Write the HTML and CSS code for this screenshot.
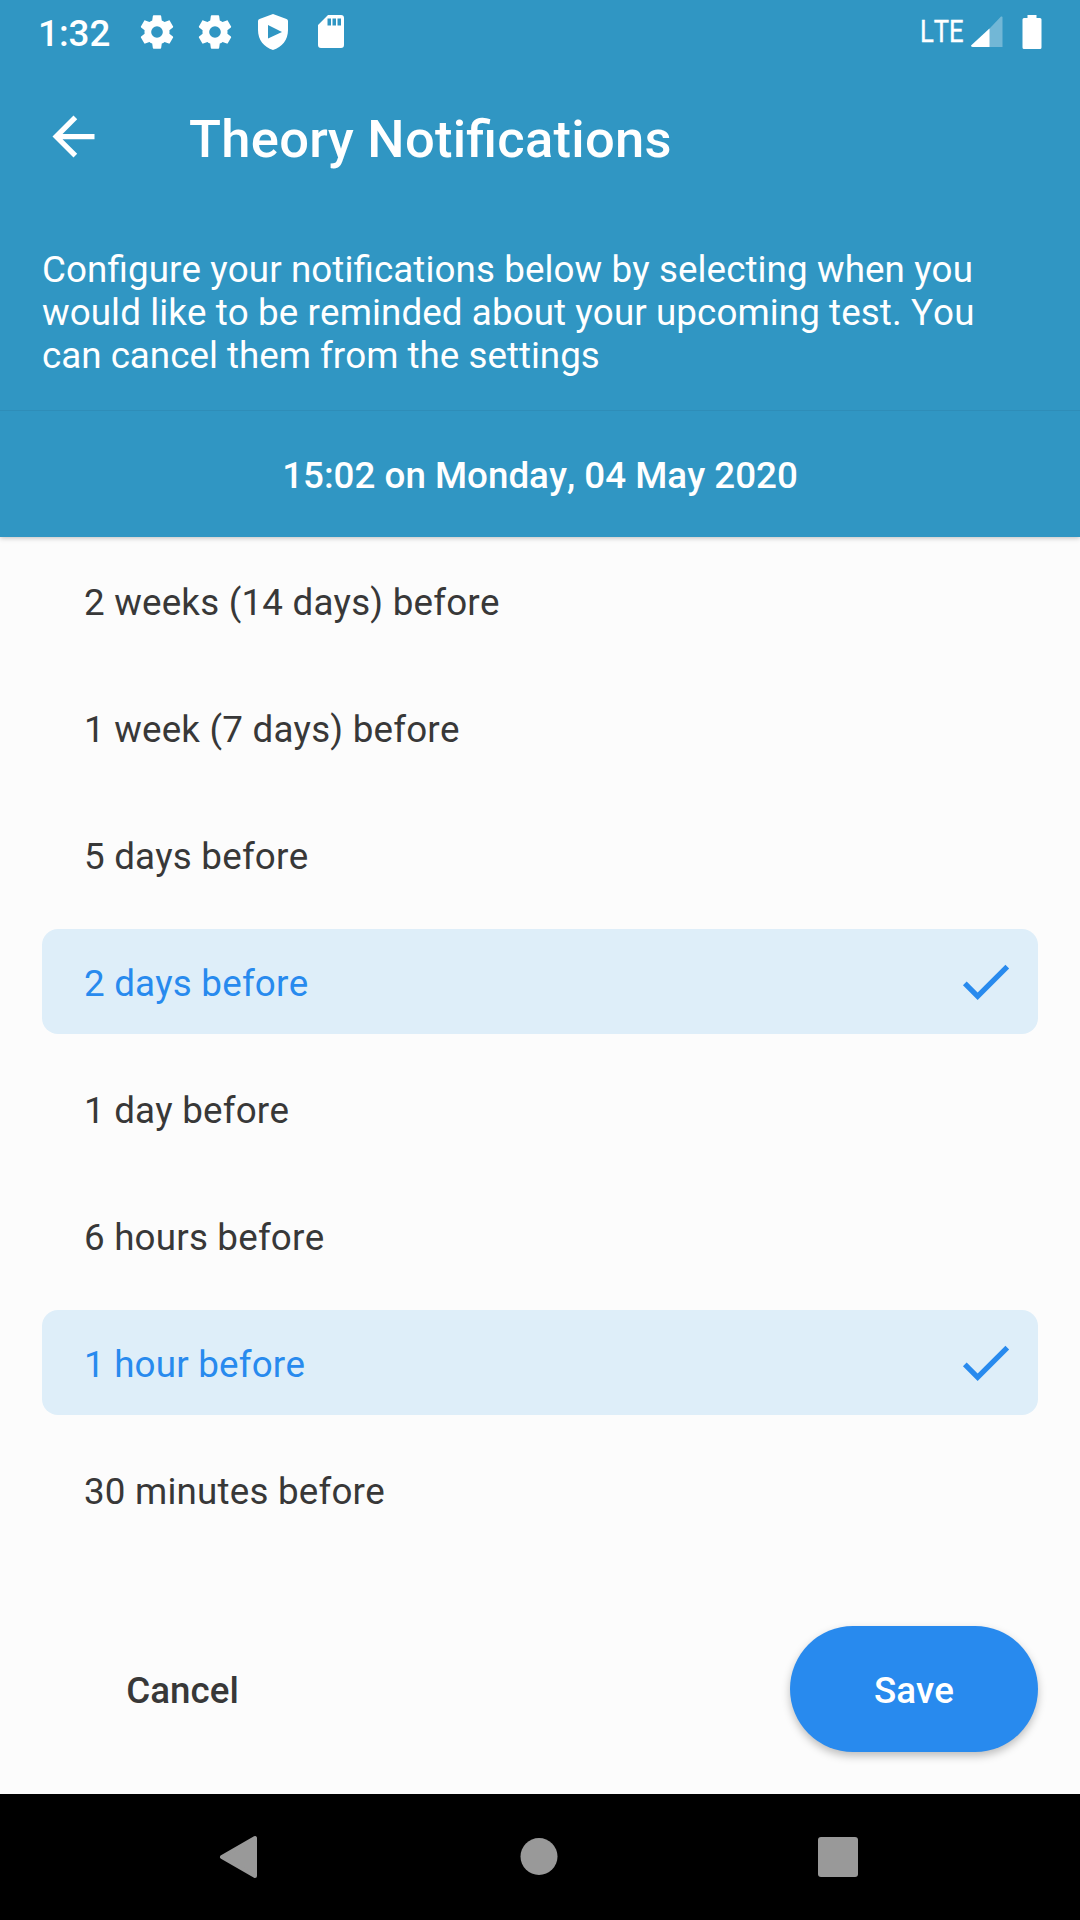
FILE: index.html
```html
<!DOCTYPE html>
<html lang="en">
<head>
<meta charset="utf-8">
<title>Theory Notifications</title>
<link rel="stylesheet" href="styles.css">
</head>
<body>
<div class="screen">
<header class="header">
<div class="status">
<span class="clock">1:32</span>
<svg class="gear" viewBox="0 0 24 24"><path d="M19.43 12.98c.04-.32.07-.64.07-.98s-.03-.66-.07-.98l2.110-1.650c.19-.15.24-.42.12-.64l-2-3.460c-.12-.22-.39-.3-.61-.22l-2.490 1c-.52-.4-1.080-.73-1.690-.98l-.38-2.650A.49.49 0 0 0 14 2h-4c-.25 0-.46.18-.49.42l-.38 2.650c-.61.25-1.170.59-1.690.98l-2.490-1c-.23-.09-.49 0-.61.22l-2 3.460c-.13.22-.07.49.12.64l2.110 1.650c-.04.32-.07.65-.07.98s.03.66.07.98l-2.110 1.650c-.19.15-.24.42-.12.64l2 3.460c.12.22.39.3.61.22l2.490-1c.52.4 1.080.73 1.690.98l.38 2.650c.03.24.24.42.49.42h4c.25 0 .46-.18.49-.42l.38-2.650c.61-.25 1.170-.59 1.690-.98l2.490 1c.23.09.49 0 .61-.22l2-3.460c.12-.22.07-.49-.12-.64zM12 15.500a3.500 3.500 0 1 1 0-7 3.500 3.500 0 0 1 0 7z"/></svg>
<svg class="gear" viewBox="0 0 24 24"><path d="M19.43 12.98c.04-.32.07-.64.07-.98s-.03-.66-.07-.98l2.110-1.650c.19-.15.24-.42.12-.64l-2-3.460c-.12-.22-.39-.3-.61-.22l-2.490 1c-.52-.4-1.080-.73-1.690-.98l-.38-2.650A.49.49 0 0 0 14 2h-4c-.25 0-.46.18-.49.42l-.38 2.650c-.61.25-1.170.59-1.690.98l-2.490-1c-.23-.09-.49 0-.61.22l-2 3.460c-.13.22-.07.49.12.64l2.110 1.650c-.04.32-.07.65-.07.98s.03.66.07.98l-2.110 1.650c-.19.15-.24.42-.12.64l2 3.460c.12.22.39.3.61.22l2.490-1c.52.4 1.080.73 1.690.98l.38 2.650c.03.24.24.42.49.42h4c.25 0 .46-.18.49-.42l.38-2.650c.61-.25 1.170-.59 1.690-.98l2.490 1c.23.09.49 0 .61-.22l2-3.460c.12-.22.07-.49-.12-.64zM12 15.500a3.500 3.500 0 1 1 0-7 3.500 3.500 0 0 1 0 7z"/></svg>
<svg class="shield" viewBox="0 0 30 36"><path fill-rule="evenodd" d="M15 0 28.500 5Q30 5.500 30 7v9c0 10-6 17-15 20C6 33 0 26 0 16V7q0-1.500 1.500-2zM10 11v13.500L24 18z"/></svg>
<svg class="sd" viewBox="0 0 26 33"><path fill-rule="evenodd" d="M10 0h13q3 0 3 3v27q0 3-3 3H3q-3 0-3-3V10zM9.500 3.500v7H13v-7zM14.500 3.500v7H18v-7zM19.500 3.500v7H23v-7z"/></svg>
<span class="lte">LTE</span>
<svg class="signal" viewBox="0 0 32 32"><path opacity=".32" d="M30 .5q1.500-.5 1.500 1V31H1z"/><path d="M18.500 12.500V31H2Q0 31 0 29.500z"/></svg>
<svg class="battery" viewBox="0 0 20 34"><path d="M5.500 0h9v3H18q1.500 0 1.500 1.500v28q0 1.500-1.500 1.500H2q-1.500 0-1.500-1.500v-28Q.5 3 2 3h3.500z"/></svg>
</div>
<div class="toolbar">
<svg class="back" viewBox="0 0 24 24"><path d="M20 11H7.830l5.590-5.590L12 4l-8 8 8 8 1.410-1.410L7.830 13H20z"/></svg>
<h1>Theory Notifications</h1>
</div>
<p class="intro"><span class="wide">Configure your notifications below by selecting when you<br>would like to be reminded about your upcoming test. You</span><br>can cancel them from the settings</p>
<div class="date">15:02 on Monday, 04 May 2020</div>
</header>
<main class="options">
<div class="option">2 weeks (14 days) before</div>
<div class="option">1 week (7 days) before</div>
<div class="option">5 days before</div>
<div class="option selected">2 days before<svg class="check" viewBox="0 0 24 24"><path d="M9 16.170 4.830 12l-1.420 1.410L9 19 21 7l-1.410-1.410z"/></svg></div>
<div class="option">1 day before</div>
<div class="option">6 hours before</div>
<div class="option selected">1 hour before<svg class="check" viewBox="0 0 24 24"><path d="M9 16.170 4.830 12l-1.420 1.410L9 19 21 7l-1.410-1.410z"/></svg></div>
<div class="option">30 minutes before</div>
</main>
<footer class="actions"><button class="cancel">Cancel</button><button class="save">Save</button></footer>
<nav class="nav">
<svg viewBox="0 0 40 44"><path stroke="currentColor" stroke-width="4" stroke-linejoin="round" d="M36 3v38L3 22z"/></svg>
<svg viewBox="0 0 40 44"><circle cx="20" cy="21.500" r="18.500"/></svg>
<svg viewBox="0 0 40 44"><rect y="2" width="40" height="40" rx="3"/></svg>
</nav>
</div>
</body>
</html>
```

FILE: styles.css
```css
* { box-sizing: border-box; }
body { margin: 0; font-family: Roboto, sans-serif; font-kerning: none; color: #383838; }
svg { display: block; fill: currentColor; flex: none; }
.screen { width: 1080px; height: 1920px; display: flex; flex-direction: column; background: #fcfcfc; }
.header { height: 537px; background: #3096c3; color: #fff; box-shadow: 0 1px 5px rgba(0,0,0,.25); }
.status { height: 63px; display: flex; align-items: center; padding: 0 38px; }
.clock { width: 99px; font-size: 36.75px; font-weight: 500; padding-top: 4px; }
.gear { width: 40px; height: 40px; margin-right: 18px; }
.shield { width: 30px; height: 36px; margin: 0 30px 0 5px; }
.sd { width: 26px; height: 33px; }
.lte { margin-left: auto; font-size: 32px; padding-bottom: 1px; transform: scaleX(.8); transform-origin: right; -webkit-text-stroke: .4px currentColor; }
.signal { width: 32px; height: 32px; margin: 0 19px 0 7px; }
.battery { width: 20px; height: 34px; }
.toolbar { height: 147px; display: flex; align-items: center; padding: 0 42px; }
.back { width: 63px; height: 63px; }
h1 { margin: 4px 0 0 84px; font-size: 52.5px; font-weight: 500; letter-spacing: .28px; font-feature-settings: "liga"; }
.intro { height: 200px; margin: 0; padding: 38px 42px; font-size: 36.75px; line-height: 43px; white-space: nowrap; }
.wide { letter-spacing: .09px; font-feature-settings: "liga"; }
.date { height: 127px; padding-top: 2px; display: flex; align-items: center; justify-content: center; font-size: 36.75px; font-weight: 500; border-top: 1px solid #2e8db8; }
.options { padding: 11px 42px 0; display: flex; flex-direction: column; gap: 22px; }
.option { height: 105px; padding: 4px 21px 0 42px; border-radius: 16px; display: flex; align-items: center; justify-content: space-between; font-size: 36.75px; letter-spacing: .2px; }
.selected { background: #deeef9; color: #288aee; }
.check { width: 63px; height: 63px; margin-bottom: 4px; }
.actions { margin-top: auto; height: 168px; padding: 0 42px 42px; display: flex; justify-content: space-between; }
button { border: 0; font: 500 36.75px Roboto, sans-serif; font-kerning: none; height: 126px; color: #383838; background: transparent; padding: 2px 0 0; }
.cancel { width: 281px; }
.save { width: 248px; color: #fff; background: #288aee; border-radius: 63px; box-shadow: 0 4px 8px rgba(0,0,0,.25); }
.nav { height: 126px; background: #000; color: #999; display: flex; align-items: center; justify-content: space-between; padding: 0 222px 0 219px; }
.nav svg { width: 40px; height: 44px; }
```
